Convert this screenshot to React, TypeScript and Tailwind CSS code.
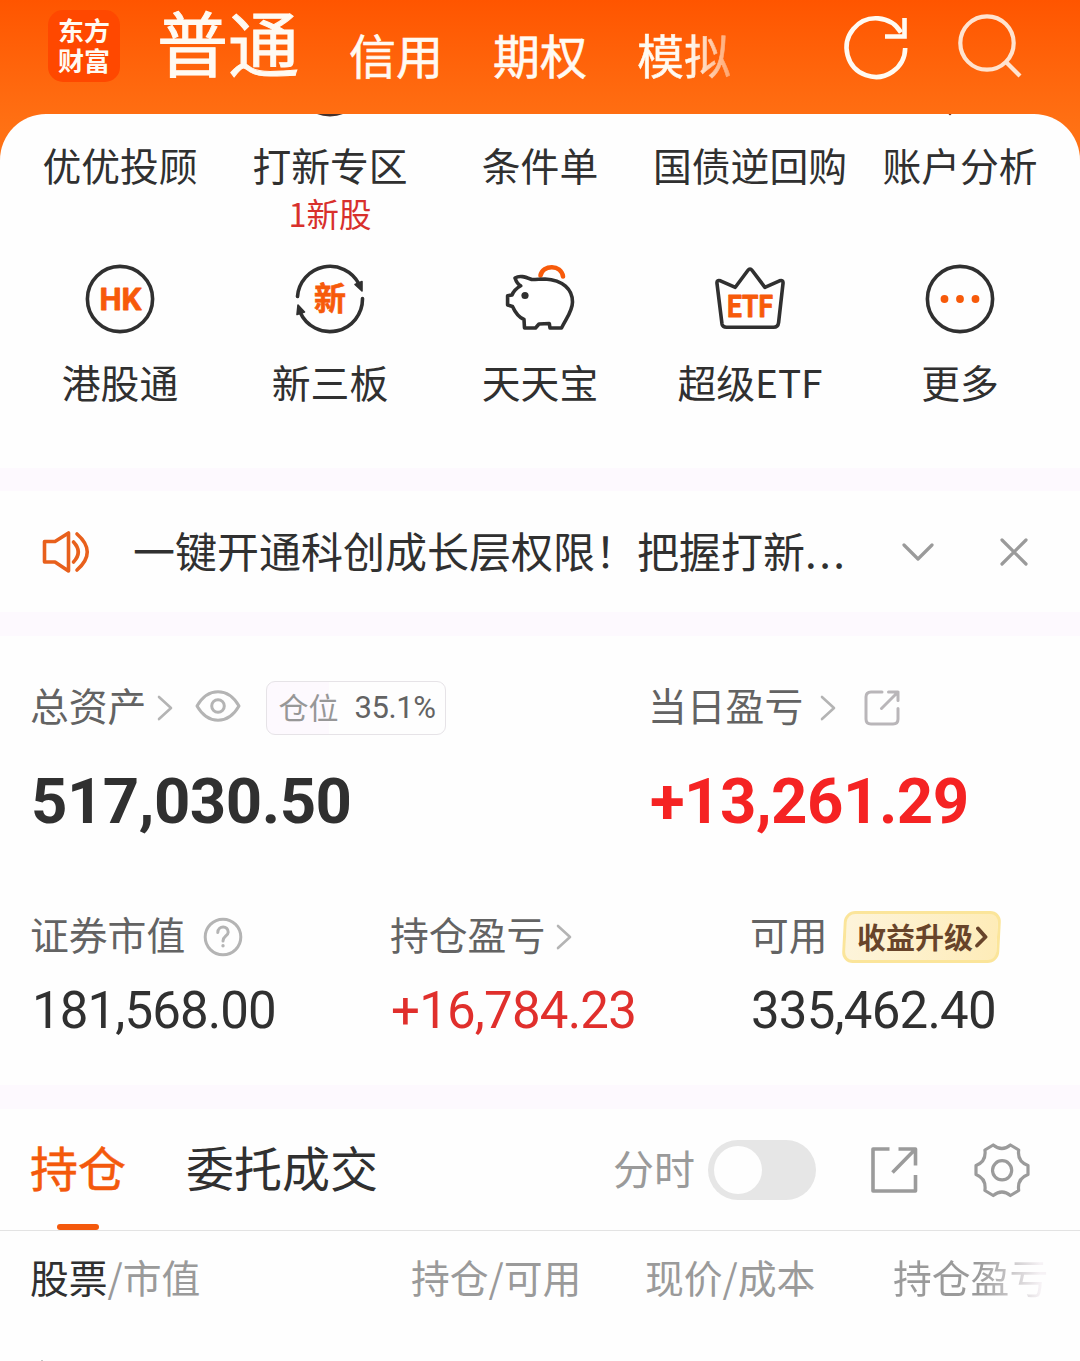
import React from 'react';

const INK = '#303030';
const ORANGE = '#f75a0a';

function Chevron({ className = '' }: { className?: string }) {
  return (
    <svg width="16" height="26" viewBox="0 0 16 26" fill="none" stroke="#b4b4b4" strokeWidth="2.6" strokeLinecap="round" strokeLinejoin="round" className={'shrink-0 ' + className}>
      <path d="M2 2 L14 13 L2 24" />
    </svg>
  );
}

function HkIcon() {
  return (
    <svg width="72" height="72" viewBox="0 0 72 72">
      <circle cx="36" cy="36" r="32.6" fill="none" stroke={INK} strokeWidth="3.6" />
      <text x="15.5" y="47.3" fontSize="31" fontWeight="700" textLength="42" lengthAdjust="spacingAndGlyphs" fill={ORANGE} stroke={ORANGE} strokeWidth="0.8" strokeLinejoin="round" className="[font-family:Roboto,sans-serif]">HK</text>
    </svg>
  );
}

function NewBoardIcon() {
  return (
    <svg width="72" height="72" viewBox="0 0 72 72" fill="none">
      <path d="M3.5 33.5 A32.6 32.6 0 0 1 65 21" stroke={INK} strokeWidth="3.6" strokeLinecap="round" />
      <path d="M68.5 35.5 A32.6 32.6 0 0 1 6 49" stroke={INK} strokeWidth="3.6" strokeLinecap="round" />
      <path d="M61 21.5 L68 18.5 L68 28 Z" fill={INK} stroke={INK} strokeWidth="1.6" strokeLinejoin="round" />
      <path d="M10.5 49 L3 51.5 L4 42 Z" fill={INK} stroke={INK} strokeWidth="1.6" strokeLinejoin="round" />
      <text x="36" y="47" textAnchor="middle" fontSize="32" fontWeight="700" fill={ORANGE} stroke={ORANGE} strokeWidth="0.6" className="[font-family:'Noto_Sans_CJK_SC',sans-serif]">新</text>
    </svg>
  );
}

function PigIcon() {
  return (
    <svg width="72" height="72" viewBox="0 0 72 72" fill="none" strokeLinecap="round" strokeLinejoin="round">
      <path d="M36.5 12.5 C39 1.5 57 1 59 13.5" stroke={ORANGE} strokeWidth="4.6" />
      <path d="M11 15 C16 12 21 14 28 16.5 C34 16.5 35 16 41 16 C59 17 68.5 26.5 68.5 39 C68.5 48 63 54 57.5 65 L46 65 L45.3 60.5 L35 61 L31.5 65 L20.5 65 L20 56.5 C14 54 11 49 8.5 43.5 L3.6 42 L3.6 32.7 L8 32 C10 27 13 25 16.7 22.8 C13 21 12 18 11 15 Z" fill="#fff" stroke={INK} strokeWidth="3.6" />
      <circle cx="21" cy="32.5" r="3.6" fill={INK} />
    </svg>
  );
}

function CrownIcon() {
  return (
    <svg width="72" height="72" viewBox="0 0 72 72" fill="none">
      <path d="M8 61 L3 20.5 Q2.5 16.5 6.5 17.8 L21.3 24.3 L33.8 7.5 Q36 4.5 38.2 7.5 L50.9 24.3 L65.5 17.8 Q69.5 16.5 69 20.5 L64.6 59.5 Q64 64.3 59.5 64.3 L12.5 64.3 Q8.5 64.3 8 61 Z" stroke={INK} strokeWidth="3.6" strokeLinejoin="round" />
      <text x="13" y="53.5" fontSize="31" fontWeight="700" textLength="46" lengthAdjust="spacingAndGlyphs" fill={ORANGE} stroke={ORANGE} strokeWidth="0.8" strokeLinejoin="round" className="[font-family:Roboto,sans-serif]">ETF</text>
    </svg>
  );
}

function MoreIcon() {
  return (
    <svg width="72" height="72" viewBox="0 0 72 72">
      <circle cx="36" cy="36" r="32.6" fill="none" stroke={INK} strokeWidth="3.6" />
      <circle cx="20.5" cy="36" r="3.9" fill={ORANGE} />
      <circle cx="36" cy="36" r="3.9" fill={ORANGE} />
      <circle cx="51.5" cy="36" r="3.9" fill={ORANGE} />
    </svg>
  );
}

const topEntries = [
  { label: '优优投顾' },
  { label: '打新专区', note: '1新股' },
  { label: '条件单' },
  { label: '国债逆回购' },
  { label: '账户分析' },
];

const iconEntries = [
  { label: '港股通', icon: <HkIcon /> },
  { label: '新三板', icon: <NewBoardIcon /> },
  { label: '天天宝', icon: <PigIcon /> },
  { label: '超级ETF', icon: <CrownIcon /> },
  { label: '更多', icon: <MoreIcon /> },
];

function Header() {
  return (
    <header className="flex h-[114px] items-start pl-[48px] text-[#fffaf2] [font-family:Roboto,'Noto_Sans_CJK_SC',sans-serif]">
      <div className="mt-[10px] flex h-[72px] w-[72px] shrink-0 flex-col items-center justify-center rounded-[15px] bg-[#ff4800] pt-[1px] text-[26px] leading-[30px] font-bold">
        <span>东方</span>
        <span>财富</span>
      </div>
      <nav className="flex w-[720px] shrink-0 items-start gap-[50px] pl-[37px] whitespace-nowrap">
        <span className="mt-[6px] text-[71px] leading-[82px] [-webkit-text-stroke:1px_#fffaf2]">普通</span>
        <span className="mt-[28px] text-[47px] leading-[60px] [-webkit-text-stroke:0.6px_#fffaf2]">信用</span>
        <span className="mt-[28px] text-[47px] leading-[60px] [-webkit-text-stroke:0.6px_#fffaf2]">期权</span>
        <span className="mt-[28px] bg-linear-to-r from-[#fffaf2] from-55% to-[#ffa268] bg-clip-text text-[47px] leading-[60px] text-transparent [-webkit-text-stroke:0.6px_transparent]">模拟</span>
      </nav>
      <svg width="72" height="72" viewBox="0 0 72 72" fill="none" stroke="#fffaf2" strokeWidth="4.6" className="mt-[11px] shrink-0">
        <path d="M65.2 37 A29.3 29.3 0 1 1 61 21.5" />
        <path d="M64.5 7 V25.5 H45" />
      </svg>
      <svg width="72" height="72" viewBox="0 0 72 72" fill="none" stroke="#ffe3cf" strokeWidth="4.2" className="mt-[11px] ml-[40px] shrink-0">
        <circle cx="35" cy="32" r="26.7" />
        <path d="M53.5 50.5 L68 65" />
      </svg>
    </header>
  );
}

function Shortcuts() {
  return (
    <section className="h-[354px] overflow-hidden rounded-t-[46px] bg-[#fefefe] px-[15px] text-[38.8px] leading-[40px] text-[#303030]">
      <svg width="1050" height="30" viewBox="0 0 1050 30" className="block">
        <ellipse cx="315" cy="-8" rx="20" ry="10.5" fill="#44302a" />
        <circle cx="935" cy="0" r="1.3" fill="#7a3b2a" />
      </svg>
      <div className="grid h-[119px] grid-cols-5">
        {topEntries.map((e) => (
          <div key={e.label} className="flex flex-col items-center whitespace-nowrap">
            <span>{e.label}</span>
            {e.note && <span className="mt-[12px] text-[32.5px] leading-[34px] text-[#d8302c]">{e.note}</span>}
          </div>
        ))}
      </div>
      <div className="grid grid-cols-5">
        {iconEntries.map((e) => (
          <div key={e.label} className="flex flex-col items-center gap-[26px] whitespace-nowrap">
            {e.icon}
            <span>{e.label}</span>
          </div>
        ))}
      </div>
    </section>
  );
}

function Notice() {
  return (
    <section className="flex h-[121px] items-center pl-[42px]">
      <svg width="50" height="44" viewBox="0 0 50 44" fill="none" stroke="#e8601c" strokeWidth="3.6" strokeLinecap="round" strokeLinejoin="round">
        <path d="M2.5 11.5 H13 L26.5 3 V41 L13 32 H2.5 Z" />
        <path d="M31.5 12 Q41 22 31.5 32" />
        <path d="M35 4 Q55.5 22 35 40" />
      </svg>
      <p className="-mt-[4px] ml-[41px] w-[769px] text-[42px] leading-[50px] whitespace-nowrap text-[#303030]">
        一键开通科创成长层权限！把握打新<span className="tracking-[2.5px]">...</span>
      </p>
      <svg width="32" height="20" viewBox="0 0 32 20" fill="none" stroke="#9a9a9a" strokeWidth="3.2" strokeLinecap="round" strokeLinejoin="round">
        <path d="M2 3 L16 17 L30 3" />
      </svg>
      <svg width="28" height="28" viewBox="0 0 28 28" fill="none" stroke="#9a9a9a" strokeWidth="3.2" strokeLinecap="round" className="ml-[66px]">
        <path d="M2 2 L26 26 M26 2 L2 26" />
      </svg>
    </section>
  );
}

function Assets() {
  return (
    <section className="h-[449px] pl-[30px] text-[38.8px] text-[#636363]">
      <div className="flex pt-[43px]">
        <div className="w-[618px]">
          <div className="flex h-[58px] items-center">
            <span className="-mt-[8px] leading-[50px]">总资产</span>
            <Chevron className="ml-[11px]" />
            <svg width="46" height="34" viewBox="0 0 46 34" fill="none" stroke="#b4b4b4" strokeWidth="3" className="-mt-[4px] ml-[22px]">
              <path d="M2 17 C13 -2 33 -2 44 17 C33 36 13 36 2 17 Z" strokeLinejoin="round" />
              <circle cx="23" cy="17" r="6.3" />
            </svg>
            <div className="ml-[25px] flex h-[54px] w-[180px] items-center rounded-[9px] border border-[#e6e3e7] bg-linear-to-r from-[#fdf9fe] from-35% to-[#fefefe] to-35% pl-[11px]">
              <span className="-mt-[4px] text-[30px] leading-[40px] text-[#979797]">仓位</span>
              <span className="ml-[16px] text-[31px] leading-[40px] tracking-[-0.4px] [font-family:Roboto,sans-serif]">35.1%</span>
            </div>
          </div>
          <div className="mt-[30px] pl-px text-[63.5px] leading-[70px] font-bold tracking-[-0.5px] text-[#303030] [font-family:Roboto,sans-serif]">517,030.50</div>
        </div>
        <div>
          <div className="flex h-[58px] items-center">
            <span className="-mt-[8px] leading-[50px]">当日盈亏</span>
            <Chevron className="ml-[17px]" />
            <svg width="36" height="36" viewBox="0 0 36 36" fill="none" stroke="#b9b6b9" strokeWidth="3" strokeLinecap="round" strokeLinejoin="round" className="ml-[28px]">
              <path d="M18 2 H7 Q2 2 2 7 V29 Q2 34 7 34 H29 Q34 34 34 29 V18.5" />
              <path d="M17.5 18.5 L34 2 M24.5 2 H34 V10.5" />
            </svg>
          </div>
          <div className="mt-[30px] pl-[2px] text-[63.5px] leading-[70px] font-bold tracking-[-0.5px] text-[#f52323] [font-family:Roboto,sans-serif]">+13,261.29</div>
        </div>
      </div>
      <div className="mt-[70px] flex">
        <div className="w-[360px]">
          <div className="flex h-[60px] items-center">
            <span className="-mt-[8px] leading-[50px]">证券市值</span>
            <svg width="40" height="40" viewBox="0 0 40 40" fill="none" stroke="#b4b4b4" strokeWidth="3" strokeLinecap="round" className="ml-[18px]">
              <circle cx="20" cy="20" r="17.8" />
              <path d="M14.8 15.5 C15 8 25.5 8.5 25.2 15.2 C25 19 20 19 20 24" />
              <circle cx="20" cy="28.8" r="1" fill="#b4b4b4" strokeWidth="1.4" />
            </svg>
          </div>
          <div className="mt-[14px] pl-[2px] text-[51px] leading-[60px] tracking-[-0.9px] text-[#303030] [font-family:Roboto,sans-serif]">181,568.00</div>
        </div>
        <div className="w-[360px]">
          <div className="flex h-[60px] items-center">
            <span className="-mt-[8px] leading-[50px]">持仓盈亏</span>
            <Chevron className="ml-[11px]" />
          </div>
          <div className="mt-[14px] pl-px text-[51px] leading-[60px] tracking-[-0.8px] text-[#e02f2c] [font-family:Roboto,sans-serif]">+16,784.23</div>
        </div>
        <div>
          <div className="flex h-[60px] items-center">
            <span className="-mt-[8px] leading-[50px]">可用</span>
            <div className="ml-[15px] flex h-[52px] w-[157px] -skew-x-3 items-center rounded-[11px] border-[3px] border-[#fbe59a] bg-linear-to-r from-[#fdf4da] to-[#feecb8] pl-[11px]">
              <span className="-mt-[3px] skew-x-3 text-[29px] leading-[40px] font-bold text-[#68442a]">收益升级</span>
              <svg width="13" height="22" viewBox="0 0 13 22" fill="none" stroke="#68442a" strokeWidth="3.8" strokeLinecap="round" strokeLinejoin="round" className="ml-[2px]">
                <path d="M2.5 2.5 L10.5 11 L2.5 19.5" />
              </svg>
            </div>
          </div>
          <div className="mt-[14px] pl-px text-[51px] leading-[60px] tracking-[-0.8px] text-[#303030] [font-family:Roboto,sans-serif]">335,462.40</div>
        </div>
      </div>
    </section>
  );
}

function HoldingsTabs() {
  return (
    <section className="flex h-[122px] border-b border-[#e3e3e3] pl-[30px]">
      <div className="flex w-[96px] flex-col items-center">
        <span className="mt-[32px] text-[48px] leading-[50px] text-[#f4590c] [-webkit-text-stroke:0.5px_#f4590c]">持仓</span>
        <span className="mt-auto h-[6px] w-[42px] shrink-0 rounded-full bg-[#f4590c]" />
      </div>
      <span className="mt-[32px] ml-[60px] w-[427px] text-[48px] leading-[50px] text-[#303030]">委托成交</span>
      <span className="mt-[37px] w-[95px] text-[41px] leading-[42px] text-[#9a9a9a]">分时</span>
      <div className="mt-[31px] h-[60px] w-[108px] rounded-full bg-[#e6e6e6] p-[6px]">
        <div className="h-[48px] w-[48px] rounded-full bg-[#fefefe]" />
      </div>
      <svg width="48" height="48" viewBox="0 0 48 48" fill="none" stroke="#9b9b9b" strokeWidth="3.6" strokeLinecap="butt" strokeLinejoin="round" className="mt-[37px] ml-[54px]">
        <path d="M19.5 3 H3 V45 H45.5 V29" />
        <path d="M22.5 26.5 L44.5 4 M28.5 3 H45.5 V19.5" />
      </svg>
      <svg width="56" height="56" viewBox="0 0 56 56" fill="none" stroke="#9b9b9b" strokeWidth="3.2" strokeLinejoin="round" className="mt-[33px] ml-[56px]">
        <path d="M19.2 3 Q28 10 36.4 3 L44.7 8 Q43 19.5 54 23.5 V32.5 Q43 36.5 44.7 48.5 L36.4 53.5 Q28 46.500 19.2 53.5 L10.9 48.5 Q12.5 36.5 2 32.5 V23.5 Q12.5 19.5 10.9 8 Z" />
        <circle cx="28.1" cy="28.3" r="9.6" />
      </svg>
    </section>
  );
}

function TableHead() {
  return (
    <div className="flex h-[96px] items-center pl-[30px] text-[38.8px] leading-[50px] whitespace-nowrap text-[#9a9a9a]">
      <span className="-mt-[6px] w-[381px]">
        <span className="text-[#303030]">股票</span>/市值
      </span>
      <span className="-mt-[6px] w-[234px]">持仓/可用</span>
      <span className="-mt-[6px] w-[248px]">现价/成本</span>
      <span className="-mt-[6px] bg-linear-to-r from-[#9a9a9a] from-55% to-[#f6f2f5] to-95% bg-clip-text text-transparent">持仓盈亏</span>
    </div>
  );
}

export default function App() {
  return (
    <div className="h-[1361px] w-[1080px] overflow-hidden bg-[#fefefe] [font-family:'Noto_Sans_CJK_SC',sans-serif]">
      <div className="bg-linear-to-b from-[#ff5500] to-[#ff7114] to-[130px]">
        <Header />
        <Shortcuts />
      </div>
      <div className="h-[23px] bg-[#fdf9fe]" />
      <Notice />
      <div className="h-[24px] bg-[#fdf9fe]" />
      <Assets />
      <div className="h-[24px] bg-[#fdf9fe]" />
      <HoldingsTabs />
      <TableHead />
      <div className="mt-[33px] ml-[41px] h-px w-[2px] bg-[#c8c8c8]" />
    </div>
  );
}
